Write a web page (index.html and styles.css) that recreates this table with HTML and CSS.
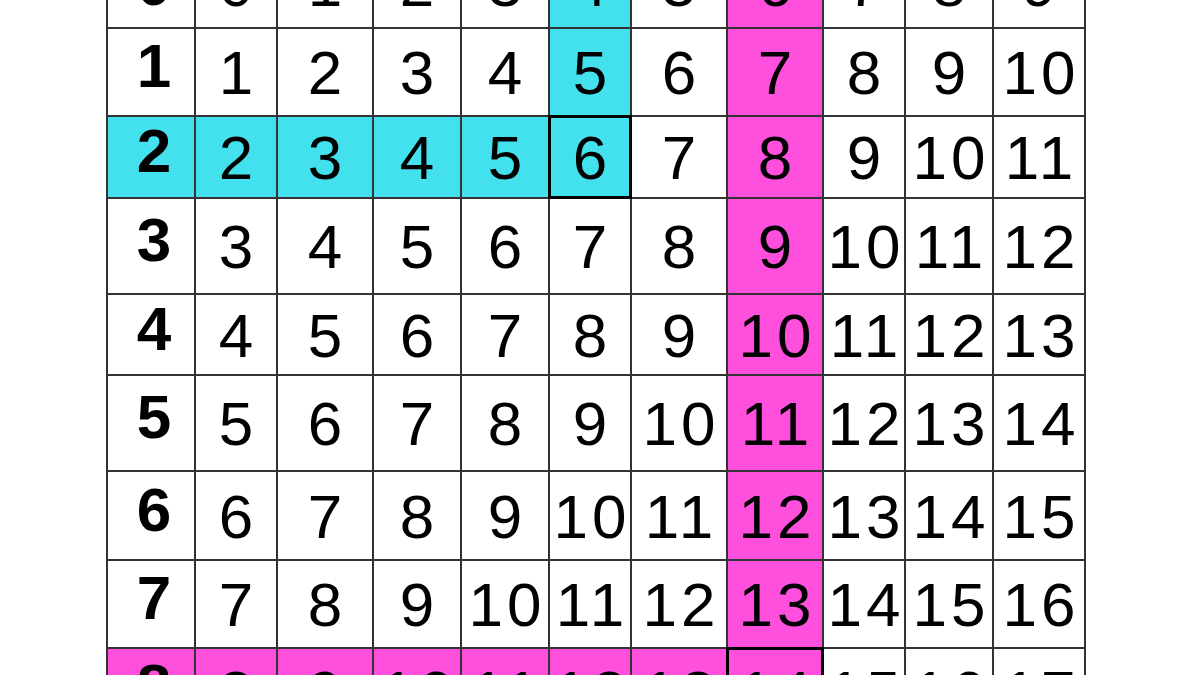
FILE: index.html
```html
<!DOCTYPE html>
<html lang="en">
<head>
    <meta charset="UTF-8">
    <meta name="viewport" content="width=device-width, initial-scale=1.0">
    <title>Addition Table</title>
    <link rel="stylesheet" href="styles.css">
</head>
<body>
    <div class="tabela">
        <!-- linha 0 -->
        <div class="cel cab topo">0</div>
        <div class="cel">0</div><div class="cel">1</div><div class="cel">2</div><div class="cel">3</div>
        <div class="cel ciano">4</div><div class="cel">5</div><div class="cel rosa">6</div>
        <div class="cel">7</div><div class="cel">8</div><div class="cel">9</div>

        <!-- linha 1 -->
        <div class="cel cab">1</div>
        <div class="cel">1</div><div class="cel">2</div><div class="cel">3</div><div class="cel">4</div>
        <div class="cel ciano">5</div><div class="cel">6</div><div class="cel rosa">7</div>
        <div class="cel">8</div><div class="cel">9</div><div class="cel">10</div>

        <!-- linha 2 (destacada) -->
        <div class="cel cab ciano">2</div>
        <div class="cel ciano">2</div><div class="cel ciano">3</div><div class="cel ciano">4</div><div class="cel ciano">5</div>
        <div class="cel ciano marcado">6</div><div class="cel">7</div><div class="cel rosa">8</div>
        <div class="cel">9</div><div class="cel">10</div><div class="cel">11</div>

        <!-- linha 3 -->
        <div class="cel cab">3</div>
        <div class="cel">3</div><div class="cel">4</div><div class="cel">5</div><div class="cel">6</div>
        <div class="cel">7</div><div class="cel">8</div><div class="cel rosa">9</div>
        <div class="cel">10</div><div class="cel">11</div><div class="cel">12</div>

        <!-- linha 4 -->
        <div class="cel cab">4</div>
        <div class="cel">4</div><div class="cel">5</div><div class="cel">6</div><div class="cel">7</div>
        <div class="cel">8</div><div class="cel">9</div><div class="cel rosa">10</div>
        <div class="cel">11</div><div class="cel">12</div><div class="cel">13</div>

        <!-- linha 5 -->
        <div class="cel cab">5</div>
        <div class="cel">5</div><div class="cel">6</div><div class="cel">7</div><div class="cel">8</div>
        <div class="cel">9</div><div class="cel">10</div><div class="cel rosa">11</div>
        <div class="cel">12</div><div class="cel">13</div><div class="cel">14</div>

        <!-- linha 6 -->
        <div class="cel cab">6</div>
        <div class="cel">6</div><div class="cel">7</div><div class="cel">8</div><div class="cel">9</div>
        <div class="cel">10</div><div class="cel">11</div><div class="cel rosa">12</div>
        <div class="cel">13</div><div class="cel">14</div><div class="cel">15</div>

        <!-- linha 7 -->
        <div class="cel cab">7</div>
        <div class="cel">7</div><div class="cel">8</div><div class="cel">9</div><div class="cel">10</div>
        <div class="cel">11</div><div class="cel">12</div><div class="cel rosa">13</div>
        <div class="cel">14</div><div class="cel">15</div><div class="cel">16</div>

        <!-- linha 8 (destacada) -->
        <div class="cel cab rosa">8</div>
        <div class="cel rosa">8</div><div class="cel rosa">9</div><div class="cel rosa">10</div><div class="cel rosa">11</div>
        <div class="cel rosa">12</div><div class="cel rosa">13</div><div class="cel rosa marcado">14</div>
        <div class="cel">15</div><div class="cel">16</div><div class="cel">17</div>
    </div>
</body>
</html>
```

FILE: styles.css
```css
html, body {
    margin: 0;
    padding: 0;
    height: 675px;
    overflow: hidden;
    background-color: #ffffff;
}
.tabela {
    display: grid;
    grid-template-columns: 88px 82px 96px 88px 88px 82px 96px 96px 82px 88px 92px;
    grid-template-rows: 88px 88px 82px 96px 81px 96px 89px 88px 88px;
    width: max-content;
    margin: -59px 0 0 106px;
    border-left: 2px solid #333;
}
.cel {
    box-sizing: border-box;
    display: flex;
    align-items: center;
    justify-content: center;
    border-right: 2px solid #333;
    border-bottom: 2px solid #333;
    font-family: "Liberation Sans", Arial, sans-serif;
    font-size: 62px;
    line-height: 1;
    letter-spacing: 4px;
    padding-left: 4px;
    padding-top: 2px;
    color: #000;
}
.cab {
    font-weight: bold;
    padding-top: 0;
    padding-bottom: 12px;
    padding-left: 10px;
}
.cab.topo {
    padding-bottom: 0;
}
.ciano {
    background-color: #43e1ee; /* linha e coluna do 2 + 4 */
}
.rosa {
    background-color: #fe4fdd; /* linha e coluna do 8 + 6 */
}
.marcado {
    position: relative;
}
.marcado::after {
    content: "";
    position: absolute;
    top: -2px;
    left: -2px;
    right: -2px;
    bottom: -2px;
    border: 3px solid #000; /* quadro da soma escolhida */
}
```
